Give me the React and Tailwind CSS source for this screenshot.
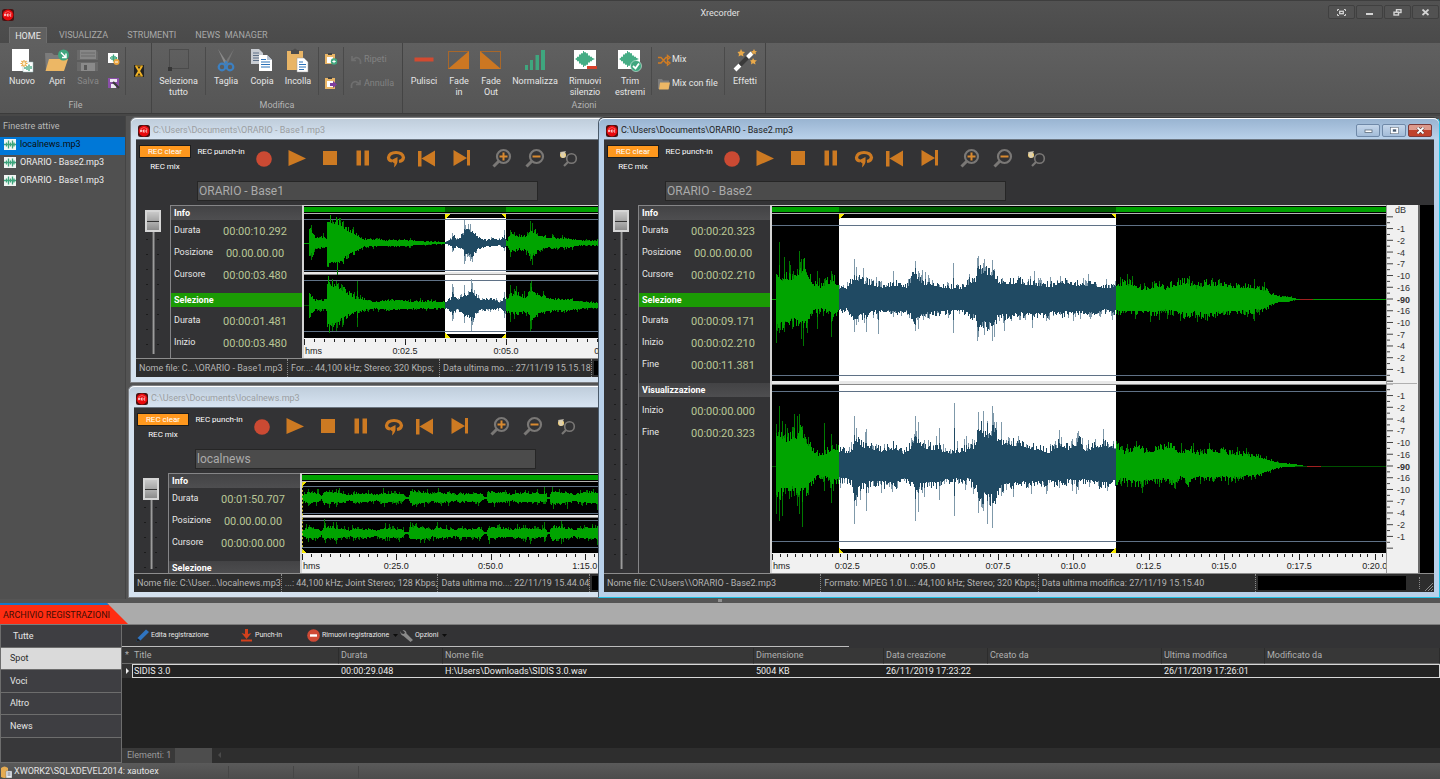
import { useMemo, useState } from "react";
import clsx from "clsx";

/* ---------- shared icons ---------- */

function RecIcon() {
  return (
    <svg viewBox="0 0 12 12" className="w-3 h-3 shrink-0" aria-hidden="true">
      <rect width="12" height="12" rx="2.5" fill="#4a1212" />
      <circle cx="6" cy="6" r="5.4" fill="#e8080c" />
      <path d="M2.5 4 Q6 1 9.5 4" stroke="#ff7a7a" strokeWidth=".7" fill="none" />
      <path d="M2.6 7.2V5h1.2v1.1H2.8M4 7.2l-.5-1M6.8 5H5.3v2.1h1.5M5.3 6h1.3M9.3 5H8v2.1h1.3" stroke="#fff" strokeWidth=".7" fill="none" />
    </svg>
  );
}

function Burst({ x = 0, y = 0, w = 20, h = 14 }) {
  return (
    <g transform={`translate(${x} ${y}) scale(${w / 20} ${h / 14})`} fill="#45ad85">
      <path d="M0 7L2 6V5H4V3H6V2H8V0H9V1H11V2H13V4H15V5H17V6L20 7L17 8V9H15V10H13V12H11V13H9V14H8V12H6V11H4V9H2V8Z" />
    </g>
  );
}

function WaveFileIcon() {
  return (
    <svg viewBox="0 0 12 11" className="w-3 h-[11px] shrink-0" aria-hidden="true">
      <rect width="12" height="11" fill="#f2f6f4" />
      <path d="M0 5.500h12M2.500 3.500v4M4.500 1.500v8M6.500 3.500v4M8.500 1.500v8M10 3.500v4" stroke="#3da57c" strokeWidth="1.300" fill="none" />
    </svg>
  );
}

const bigIcons = {
  nuovo: (
    <>
      <path d="M2 0H19V22H2Z" fill="#fff" />
      <path d="M13 13H23V23H13Z" fill="#fff" stroke="#9bb" strokeWidth=".5" />
      <path d="M15 18v2M17 17v4M19 15.5v6.5M21 17v3" stroke="#3da57c" strokeWidth="1.3" />
      <path d="M14 11v7M10.500 14.500h7M11.500 12l5 5M16.500 12l-5 5" stroke="#e8a33a" strokeWidth="1.100" />
      <circle cx="14" cy="14.500" r="1.500" fill="#fff3d0" />
    </>
  ),
  apri: (
    <>
      <path d="M0 4H7L9 6H17V22H1Z" fill="#7b7b7b" />
      <path d="M4 10H23L19 22H0.500Z" fill="#ecb765" />
      <circle cx="18.500" cy="6" r="5.500" fill="#3fa67e" />
      <path d="M16 3.500l4.500 4.500M21 4.500V8.500H17" stroke="#fff" strokeWidth="1.500" fill="none" />
    </>
  ),
  salva: (
    <>
      <path d="M1 1H20L22 3V22H1Z" fill="#6a6a6a" />
      <path d="M4 1H20V10H4Z" fill="#868686" />
      <path d="M5 4H19M5 7H19" stroke="#6a6a6a" />
      <path d="M5 14H19V22H5Z" fill="#8a8a8a" />
      <path d="M8 16H11V21H8Z" fill="#585858" />
      <path d="M1 12H22" stroke="#585858" strokeWidth="1.500" />
    </>
  ),
  seleziona: (
    <>
      <rect x="2.500" y="0.500" width="19" height="19" fill="none" stroke="#3a3a3a" strokeDasharray="1 1" />
      <rect x="1" y="18" width="4" height="4" fill="#363636" />
    </>
  ),
  taglia: (
    <>
      <path d="M4 0L14 15L11 16Z" fill="#8a8a8a" />
      <path d="M20 0L10 15L13 16Z" fill="#767676" />
      <circle cx="8" cy="18" r="3.300" fill="none" stroke="#3c80c2" strokeWidth="2.200" />
      <circle cx="16" cy="18" r="3.300" fill="none" stroke="#3c80c2" strokeWidth="2.200" />
      <circle cx="12" cy="13.500" r="1.500" fill="#3c80c2" />
    </>
  ),
  copia: (
    <>
      <path d="M1 0H9L13 4V15H1Z" fill="#c8ccd2" />
      <path d="M3 4H9M3 6.500H11M3 9H11M3 11.500H9" stroke="#5d6f86" />
      <path d="M9 6H17L22 11V22H9Z" fill="#fff" />
      <path d="M11 10.500H16M11 13H20M11 15.500H20M11 18H20" stroke="#2d72b8" />
      <path d="M17 6V11H22Z" fill="#b9c6d6" />
    </>
  ),
  incolla: (
    <>
      <path d="M1 2H17V21H1Z" fill="#e9b566" />
      <path d="M5 1H7Q9 -2 11 1H13V5H5Z" fill="#4c4c4c" />
      <path d="M11 9H18L22 13V23H11Z" fill="#fff" stroke="#999" strokeWidth=".5" />
      <path d="M13 13H17M13 15.500H20M13 18H20M13 20.500H18" stroke="#2d72b8" />
    </>
  ),
  pulisci: <path d="M2.500 8.500H21.500V12.500H2.500Z" fill="#d24a30" />,
  fadeIn: (
    <>
      <rect x="1.500" y="2.500" width="20" height="17" fill="none" stroke="#a8672a" />
      <path d="M22 2V20H1Z" fill="#cc7722" />
    </>
  ),
  fadeOut: (
    <>
      <rect x="1.500" y="2.500" width="20" height="17" fill="none" stroke="#a8672a" />
      <path d="M1 2V20H22Z" fill="#cc7722" />
    </>
  ),
  normalizza: <path d="M2 16H5V21H2ZM7 11H10V21H7ZM12.500 6H16V21H12.500ZM18 1H22V21H18Z" fill="#3fa67e" />,
  rimuovi: (
    <>
      <rect x="1" y="1" width="22" height="19" fill="#fff" />
      <Burst x={2} y={2} w={20} h={16} />
      <path d="M14 17H24V20H14Z" fill="#d8402c" />
    </>
  ),
  trim: (
    <>
      <rect x="0" y="1" width="22" height="19" fill="#fff" />
      <Burst x={1} y={2} w={20} h={16} />
      <circle cx="18" cy="17" r="5.500" fill="#3fa67e" stroke="#d8efe4" strokeWidth=".6" />
      <path d="M15 17L17.500 19.300L21 14.500" stroke="#fff" strokeWidth="1.800" fill="none" />
    </>
  ),
  effetti: (
    <>
      <path d="M2 21L7 16" stroke="#fff" strokeWidth="4" />
      <path d="M7 16L15 8" stroke="#3a3a3a" strokeWidth="4" />
      <path d="M14.500 8.500L19 4" stroke="#fff" strokeWidth="4" />
      <path d="M8 0L9.200 2.500L12 3L10 5L10.500 7.500L8 6.300L5.500 7.500L6 5L4.500 3L7 2.500Z" fill="#e9a94a" />
      <path d="M21 0L22 2L24 2.300L22.500 3.500L23 5.500L21 4.600L19 5.500L19.500 3.500L18 2.300L20 2Z" fill="#e9a94a" />
      <path d="M20 9L21.200 11L24 11.500L22 13L22.500 15.500L20 14.300L18 15.500L18.300 13L17 11.500L19.200 11Z" fill="#e9a94a" />
    </>
  ),
};

const smallIcons = {
  minusFile: (
    <>
      <rect x="0" y="0" width="10" height="10" fill="#fff" />
      <path d="M2 5h1M4 3v4M5.500 1.500v7M7 3v5M8.500 4v2" stroke="#3da57c" strokeWidth="1.300" />
      <circle cx="8.500" cy="9" r="3" fill="#e9a23c" />
      <path d="M7 9H10" stroke="#fff" />
    </>
  ),
  saveAs: (
    <>
      <path d="M0 1H11V11H0Z" fill="#8a4fa8" />
      <path d="M2 2H9V5H2ZM3 7H8V11H3Z" fill="#f0e8f4" />
      <path d="M5 5L11 11" stroke="#3c3c3c" strokeWidth="2.200" />
    </>
  ),
  hourglass: (
    <>
      <rect x="1" y="0" width="10" height="12" fill="#222" />
      <path d="M3 1L9 11M9 1L3 11" stroke="#f0b226" strokeWidth="2" />
      <path d="M2 1H10M2 11H10" stroke="#d8a020" strokeWidth="1.200" />
    </>
  ),
  pasteAdd: (
    <>
      <path d="M0 1H10V11H0Z" fill="#e9b566" />
      <path d="M3 0H7V2H3Z" fill="#444" />
      <path d="M2 4H8V10H2Z" fill="#fff" />
      <circle cx="9" cy="8.500" r="3.200" fill="#3fa67e" />
      <path d="M9 6.800V10.200M7.300 8.500H10.700" stroke="#fff" />
    </>
  ),
  pasteNext: (
    <>
      <path d="M0 1H10V12H0Z" fill="#e9b566" />
      <path d="M3 0H7V2H3Z" fill="#444" />
      <path d="M2 4H8V10H2Z" fill="#fff" />
      <path d="M5 6H8V4L12 7.500L8 11V9H5Z" fill="#7d3f9e" />
    </>
  ),
  back: <path d="M10.500 10V7Q9.500 3.500 6 3.500L2 6M2 2V6.500H6" stroke="#6f6f6f" strokeWidth="1.700" fill="none" />,
  forward: <path d="M1.500 10V7Q2.500 3.500 6 3.500L10 6M10 2V6.500H6" stroke="#6f6f6f" strokeWidth="1.700" fill="none" />,
  shuffle: (
    <path d="M0 3.500H3L8 9H10M0 9H3L8 3.500H10M9.500 1.500L12 3.500L9.500 5.500ZM9.500 7L12 9L9.500 11Z" stroke="#d17c22" strokeWidth="1.400" fill="none" />
  ),
  folder: (
    <>
      <path d="M0 1H4L5 2.500H11V11H0Z" fill="#7b7b7b" />
      <path d="M2 4.500H12L10.500 11.500H1Z" fill="#ecb765" />
    </>
  ),
};

function SmallIcon({ name }) {
  return (
    <svg viewBox="0 0 12 12" className="w-3 h-3 shrink-0 overflow-visible" aria-hidden="true">
      {smallIcons[name]}
    </svg>
  );
}

/* ---------- ribbon ---------- */

function BigButton({ icon, label, className, disabled }) {
  return (
    <button
      type="button"
      disabled={disabled}
      className={clsx("flex flex-col items-center pt-[6px] gap-[5px] leading-[11px]", className, disabled ? "text-[#888888]" : "text-[#e6e6e6]")}
    >
      <svg viewBox="0 0 24 22" className="w-6 h-[22px] shrink-0 overflow-visible" aria-hidden="true">
        {bigIcons[icon]}
      </svg>
      <span>{label}</span>
    </button>
  );
}

function IconStack({ icons }) {
  return (
    <div className="flex flex-col items-center gap-3 pt-[10px] flex-1">
      {icons.map(([name, label]) => (
        <button key={name} type="button" aria-label={label}>
          <SmallIcon name={name} />
        </button>
      ))}
    </div>
  );
}

function LabelStack({ items, disabled, className }) {
  return (
    <div className={clsx("flex flex-col gap-3 pt-[11px] pl-[6px]", className)}>
      {items.map(([icon, label]) => (
        <button
          key={label}
          type="button"
          disabled={disabled}
          className={clsx("flex items-center gap-[2px] h-3 whitespace-nowrap", disabled ? "text-[#828282]" : "text-[#e6e6e6]")}
        >
          <SmallIcon name={icon} />
          {label}
        </button>
      ))}
    </div>
  );
}

function Sep() {
  return <div className="w-px h-12 mt-1 bg-[#4a4a4a] shrink-0" />;
}

function RibbonGroup({ title, children }) {
  return (
    <section className="flex flex-col border-r border-[#444444]">
      <div className="flex flex-1">{children}</div>
      <h2 className="h-[14px] leading-[13px] text-center text-[#b4b4b4]">{title}</h2>
    </section>
  );
}

function Ribbon() {
  return (
    <div className="flex h-[71px] bg-linear-to-b from-[#606060] to-[#555555] border-b border-[#3b3b3b] text-[9px]">
      <RibbonGroup title="File">
        <BigButton icon="nuovo" label="Nuovo" className="ml-1 w-9" />
        <BigButton icon="apri" label="Apri" className="w-[34px]" />
        <BigButton icon="salva" label="Salva" className="w-7" disabled />
        <div className="w-[23px] flex">
          <IconStack icons={[["minusFile", "Chiudi"], ["saveAs", "Salva con nome"]]} />
        </div>
        <Sep />
        <button type="button" aria-label="Attesa" className="w-[25px] flex justify-center items-center">
          <SmallIcon name="hourglass" />
        </button>
      </RibbonGroup>
      <RibbonGroup title="Modifica">
        <BigButton icon="seleziona" label={<>Seleziona<br />tutto</>} className="w-[53px]" />
        <Sep />
        <BigButton icon="taglia" label="Taglia" className="w-10" />
        <BigButton icon="copia" label="Copia" className="w-8" />
        <BigButton icon="incolla" label="Incolla" className="w-10" />
        <Sep />
        <div className="w-6 flex">
          <IconStack icons={[["pasteAdd", "Incolla e aggiungi"], ["pasteNext", "Incolla in nuovo"]]} />
        </div>
        <Sep />
        <LabelStack items={[["back", "Ripeti"], ["forward", "Annulla"]]} className="w-[58px]" disabled />
      </RibbonGroup>
      <RibbonGroup title="Azioni">
        <BigButton icon="pulisci" label="Pulisci" className="w-[42px]" />
        <BigButton icon="fadeIn" label={<>Fade<br />in</>} className="w-7" />
        <BigButton icon="fadeOut" label={<>Fade<br />Out</>} className="w-9" />
        <BigButton icon="normalizza" label="Normalizza" className="w-[52px]" />
        <BigButton icon="rimuovi" label={<>Rimuovi<br />silenzio</>} className="w-12" />
        <BigButton icon="trim" label={<>Trim<br />estremi</>} className="w-[42px]" />
        <Sep />
        <LabelStack items={[["shuffle", "Mix"], ["folder", "Mix con file"]]} className="w-[72px]" />
        <Sep />
        <BigButton icon="effetti" label="Effetti" className="w-10" />
      </RibbonGroup>
    </div>
  );
}

function Header() {
  const [tab, setTab] = useState("HOME");
  const tabs = ["HOME", "VISUALIZZA", "STRUMENTI", "NEWS  MANAGER"];
  const box = "w-[27px] h-[14px] flex items-center justify-center border border-[#404040] rounded-xs bg-[#525252]";

  return (
    <header className="bg-linear-to-b from-[#525252] to-[#4a4a4a] border-t border-[#3e3e3e]">
      <div className="grid grid-cols-3 h-[26px]">
        <div className="pl-[2px] pt-2">
          <RecIcon />
        </div>
        <h1 className="text-center text-[9px] leading-[24px] text-[#e2e2e2]">Xrecorder</h1>
        <div className="flex justify-end gap-px pt-1 pr-px">
          <button type="button" aria-label="Schermo intero" className={box}>
            <svg viewBox="0 0 9 7" className="w-[9px] h-[7px]" stroke="#d4d4d4" fill="none">
              <path d="M.5 2V.5H2M7 .5H8.500V2M8.500 5V6.500H7M2 6.500H.5V5" />
              <rect x="2.700" y="2.300" width="3.600" height="2.400" strokeWidth="1.300" />
            </svg>
          </button>
          <button type="button" aria-label="Riduci" className={box}>
            <svg viewBox="0 0 9 7" className="w-[9px] h-[7px]">
              <path d="M1 4H8V6H1Z" fill="#d4d4d4" />
            </svg>
          </button>
          <button type="button" aria-label="Ripristina" className={box}>
            <svg viewBox="0 0 9 7" className="w-[9px] h-[7px]" stroke="#d4d4d4" fill="none" strokeWidth="1.400">
              <rect x="3.500" y=".7" width="4.500" height="2.800" />
              <rect x="1" y="3.200" width="4.500" height="2.800" fill="#525252" />
            </svg>
          </button>
          <button type="button" aria-label="Chiudi" className={box}>
            <svg viewBox="0 0 9 7" className="w-[9px] h-[7px]">
              <path d="M1.500 .5L7.500 6M7.500 .5L1.500 6" stroke="#d4d4d4" strokeWidth="1.700" />
            </svg>
          </button>
        </div>
      </div>
      <nav className="flex h-4 pl-[9px] text-[9px] leading-4">
        {tabs.map((t) => (
          <button
            key={t}
            type="button"
            onClick={() => setTab(t)}
            className={clsx(
              "whitespace-pre mr-[5px]",
              t === tab ? "w-[38px] bg-[#606060] border-x border-t border-[#6c6c6c] text-[#e8e8e8]" : "px-[7px] text-[#a8a8a8]"
            )}
          >
            {t}
          </button>
        ))}
      </nav>
    </header>
  );
}

/* ---------- wave forms ---------- */

// small deterministic generator, so that a file always draws the same
function makeRandom(seed) {
  let a = seed;
  return () => {
    a = (a * 1664525 + 1013904223) % 4294967296;
    return a / 4294967296;
  };
}

function valueAt(points, x) {
  for (let i = 1; i < points.length; i++) {
    const [x0, u0, d0] = points[i - 1];
    const [x1, u1, d1] = points[i];
    if (x <= x1) {
      const t = (x - x0) / (x1 - x0 || 1);
      return [u0 + (u1 - u0) * t, d0 + (d1 - d0) * t];
    }
  }
  return [0, 0];
}

function buildColumns(lane, width) {
  const rnd = makeRandom(lane.seed);
  const cols = [];
  for (let x = 0; x < width; x++) {
    const [u, d] = valueAt(lane.points, x);
    const n1 = 0.82 + 0.42 * rnd() ** 2;
    const n2 = 0.82 + 0.42 * rnd() ** 2;
    const tip1 = rnd() < 0.25 ? 1 + rnd() * lane.rough : 1;
    const tip2 = rnd() < 0.25 ? 1 + rnd() * lane.rough : 1;
    cols.push({ x, up: u * n1, down: d * n2, tipUp: u * n1 * tip1, tipDown: d * n2 * tip2 });
  }
  (lane.spikes || []).forEach(([x, up, down]) => {
    const c = cols[x];
    c.tipUp = up;
    c.tipDown = down;
    c.up = Math.max(c.up, up * 0.6);
    c.down = Math.max(c.down, down * 0.6);
  });
  return cols;
}

// stepped outline, one step for each column
function columnsPath(cols, center, up, down) {
  return cols.map((c) => `M${c.x} ${(center - c[up]).toFixed(1)}h1V${(center + c[down]).toFixed(1)}h-1Z`).join("");
}

function WaveLanes({ wave }) {
  const { width, height, lanes, selection, split } = wave;
  const drawn = useMemo(() => lanes.map((lane) => buildColumns(lane, width)), [lanes, width]);
  const [s0, s1] = selection || [0, 0];

  return (
    <svg viewBox={`0 0 ${width} ${height}`} preserveAspectRatio="none" className="block w-full flex-1 min-h-0 bg-black" shapeRendering="crispEdges">
      {selection && <rect x={s0} y="4" width={s1 - s0} height={height - 8} fill="#fff" />}
      <rect x="0" y={split} width={width} height="2" fill="#e8e8e8" />
      <rect x="0" y={split + 2} width={width} height="1" fill="#8a8a8a" />
      {lanes.map((lane, i) => {
        const inside = drawn[i].filter((c) => c.x >= s0 && c.x < s1);
        const outside = drawn[i].filter((c) => c.x < s0 || c.x >= s1);
        return (
          <g key={lane.center}>
            {lane.guides.map((y) => (
              <rect key={y} x="0" y={y} width={width} height="1" fill="#5f7186" />
            ))}
            <rect x="0" y={lane.center} width={width} height="1" fill={i ? "#005000" : "#00a000"} />
            <path d={columnsPath(outside, lane.center, "tipUp", "tipDown")} fill="#007800" />
            <path d={columnsPath(outside, lane.center, "up", "down")} fill="#00a400" />
            <path d={columnsPath(inside, lane.center, "tipUp", "tipDown")} fill="#7f99aa" />
            <path d={columnsPath(inside, lane.center, "up", "down")} fill="#204a63" />
            {lane.red && <rect x={lane.red[0]} y={lane.center} width={lane.red[1]} height="1" fill="#a02020" />}
          </g>
        );
      })}
      <path
        d={`M${s0} 0h5l-5 5ZM${s0} ${height}h5l-5 -5Z` + (selection ? `M${s1} 0h-5l5 5ZM${s1} ${height}h-5l5 -5Z` : "")}
        fill="#f5e800"
      />
      {!selection && <path d={`M.5 0V${height}`} stroke="#d8cf30" strokeDasharray="2 2" />}
    </svg>
  );
}

function TimeRuler({ labels, step }) {
  const ticks = [];
  for (let i = 0; (i * step) / 10 < 100; i++) ticks.push(i);
  return (
    <svg className="block w-full h-5 shrink-0 bg-[#f1f1f1] font-['Liberation_Sans',sans-serif]" shapeRendering="crispEdges">
      {ticks.map((i) => (
        <rect key={i} x={`${(i * step) / 10}%`} y="1" width="1" height={i % 10 ? 3 : 6} fill="#222" />
      ))}
      <text x="1" y="16" fontSize="9" fill="#222">hms</text>
      {labels.map((l, i) => (
        <text key={l} x={`${(i + 1) * step}%`} y="16" fontSize="9" textAnchor="middle" fill="#222">
          {l}
        </text>
      ))}
    </svg>
  );
}

const dbLabels = ["-1", "-2", "-4", "-7", "-10", "-16", "-90", "-16", "-10", "-7", "-4", "-2", "-1"];

function DbScale({ wave }) {
  const pct = (v) => `${(v / wave.height) * 100}%`;
  const step = 11.67;
  return (
    <div className="w-8 shrink-0 flex flex-col bg-[#f0f0f0] text-[#333333] border-l border-[#9a9a9a] font-['Liberation_Sans',sans-serif]">
      <div className="h-2 pl-2 text-[9px] leading-[11px]">dB</div>
      <svg className="block w-full flex-1 min-h-0 overflow-visible">
        {wave.lanes.map((lane) => (
          <g key={lane.center}>
            {dbLabels.map((l, i) => (
              <text key={i} x="10" y={pct(lane.center + (i - 6) * step + 4)} fontSize="9" fill="#333" fontWeight={l === "-90" ? 700 : 400}>
                {l}
              </text>
            ))}
            {Array.from({ length: 29 }, (_, i) => (
              <rect key={i} x="0" y={pct(lane.center + (i - 14) * (step / 2))} width={i % 2 ? 3 : 6} height="1" fill="#444" />
            ))}
          </g>
        ))}
        <rect x="0" y={pct(wave.split + 2)} width="30" height="1" fill="#b0b0b0" />
      </svg>
      <div className="h-5" />
    </div>
  );
}

const base2Wave = {
  width: 614,
  height: 338,
  split: 167,
  selection: [67, 344],
  step: 12.27,
  labels: ["0:02.5", "0:05.0", "0:07.5", "0:10.0", "0:12.5", "0:15.0", "0:17.5", "0:20.0"],
  lanes: [
    {
      center: 85, guides: [11, 161], seed: 17, rough: 0.5, red: [528, 13],
      points: [
        [0, 0, 0], [3, 0, 0], [4, 28, 30], [10, 22, 27], [20, 23, 22], [28, 32, 26], [33, 34, 26], [40, 18, 14], [46, 12, 10], [53, 17, 12],
        [62, 20, 18], [67, 12, 12], [76, 13, 11], [82, 24, 24], [88, 20, 18], [96, 17, 14], [110, 14, 13], [122, 16, 14], [135, 14, 13], [143, 28, 24],
        [150, 18, 17], [165, 15, 14], [180, 12, 13], [190, 13, 13], [200, 20, 18], [204, 22, 18], [206, 36, 34], [212, 26, 24], [220, 28, 30], [224, 20, 20], [230, 18, 18], [250, 18, 16],
        [270, 15, 17], [282, 15, 14], [288, 20, 15], [310, 15, 14], [320, 17, 16], [332, 13, 12], [345, 15, 13], [352, 17, 14], [362, 16, 14], [370, 11, 13], [380, 12, 15], [386, 15, 14], [392, 11, 11],
        [400, 15, 13], [415, 18, 17], [424, 13, 14], [432, 16, 18], [445, 16, 14], [460, 14, 14], [480, 13, 13],
        [494, 10, 10], [498, 6, 6], [507, 3, 3], [516, 3, 3], [522, 1, 1], [530, 0, 0], [615, 0, 0],
      ],
      spikes: [[7, 57, 34], [12, 42, 33], [27, 48, 25], [29, 40, 40], [31, 40, 47], [45, 28, 30], [59, 28, 38], [60, 25, 22], [82, 40, 33], [84, 32, 26], [94, 22, 33], [106, 18, 35], [121, 28, 18], [143, 38, 32], [146, 28, 30], [181, 36, 34], [205, 41, 42], [206, 43, 38], [212, 40, 36], [220, 39, 42], [222, 30, 38]],
    },
    {
      center: 251, guides: [176, 326], seed: 91, rough: 0.45, red: [535, 14],
      points: [
        [0, 0, 0], [3, 0, 0], [4, 34, 30], [10, 28, 27], [20, 30, 25], [28, 34, 27], [33, 30, 26], [40, 16, 18], [46, 12, 10], [53, 14, 13],
        [62, 20, 16], [67, 17, 14], [74, 14, 15], [80, 18, 18], [82, 32, 32], [88, 22, 22], [96, 20, 18], [110, 17, 18], [122, 20, 20], [132, 14, 15], [140, 22, 18], [143, 32, 30],
        [148, 20, 20], [165, 19, 19], [180, 14, 14], [190, 17, 16], [197, 17, 15], [204, 22, 22], [206, 42, 38], [212, 34, 32], [222, 34, 35], [230, 24, 22], [250, 23, 19],
        [270, 17, 18], [276, 15, 17], [288, 24, 18], [297, 17, 16], [306, 26, 18], [312, 17, 16], [330, 22, 20], [345, 20, 16], [352, 14, 14], [365, 18, 19], [375, 15, 16], [390, 19, 15], [400, 21, 17], [408, 13, 12], [416, 18, 17], [424, 13, 13], [440, 16, 13],
        [460, 13, 13], [480, 11, 11], [490, 9, 9], [500, 5, 4], [507, 3, 2], [520, 2, 1], [532, 0, 0], [615, 0, 0],
      ],
      spikes: [[4, 42, 48], [7, 60, 55], [10, 45, 50], [22, 52, 30], [25, 50, 40], [27, 52, 48], [30, 40, 61], [52, 43, 25], [59, 32, 37], [82, 50, 58], [84, 38, 40], [94, 37, 45], [143, 50, 55], [146, 44, 46], [167, 38, 34], [182, 63, 50], [206, 54, 47], [211, 55, 45], [215, 45, 58], [220, 60, 62], [229, 44, 30], [287, 36, 22], [306, 35, 24]],
    },
  ],
};

const base1Wave = {
  width: 418,
  height: 124,
  split: 58,
  selection: [141, 202],
  step: 24.15,
  labels: ["0:02.5", "0:05.0", "0:07.5"],
  lanes: [
    {
      center: 29, guides: [5, 56], seed: 5, rough: 0.4,
      points: [
        [0, 0, 0], [4, 0, 0], [5, 13, 13], [8, 12, 12], [11, 6, 6], [20, 6, 5], [22, 5, 5], [23, 25, 24], [34, 22, 22], [42, 15, 14], [50, 10, 10],
        [60, 4, 4], [75, 3, 3], [105, 3, 3], [112, 2, 2], [141, 1, 1], [147, 4, 3], [149, 9, 7], [152, 4, 3], [158, 8, 6], [162, 13, 11], [168, 13, 13],
        [174, 6, 6], [182, 3, 3], [189, 5, 4], [195, 3, 2], [200, 6, 5], [203, 3, 3], [206, 10, 9], [216, 7, 6], [222, 7, 7], [227, 14, 14], [234, 9, 8],
        [244, 6, 5], [256, 5, 5], [264, 5, 5], [271, 3, 3], [300, 2, 2], [421, 1, 1],
      ],
      spikes: [[7, 18, 17], [106, 5, 5], [148, 10, 9], [160, 23, 21], [161, 18, 18], [166, 19, 18], [200, 13, 8], [206, 13, 14], [226, 22, 18], [228, 20, 22]],
    },
    {
      center: 91, guides: [66, 117], seed: 8, rough: 0.5,
      points: [
        [0, 0, 0], [4, 0, 0], [5, 11, 11], [8, 9, 9], [11, 5, 5], [22, 5, 5], [23, 24, 23], [32, 21, 20], [42, 14, 12], [50, 8, 8], [60, 6, 5],
        [70, 3, 4], [82, 5, 5], [105, 4, 4], [125, 4, 4], [141, 3, 3], [149, 9, 8], [153, 5, 4], [160, 11, 10], [168, 13, 13], [176, 6, 5], [189, 6, 5],
        [195, 3, 3], [200, 7, 7], [204, 7, 7], [210, 12, 9], [222, 8, 7], [227, 16, 16], [236, 10, 8], [250, 6, 6], [264, 6, 6], [280, 3, 3], [421, 2, 2],
      ],
      spikes: [[28, 26, 26], [32, 24, 26], [38, 20, 22], [53, 24, 22], [148, 21, 16], [149, 18, 14], [160, 20, 18], [167, 26, 26], [168, 22, 20], [200, 13, 13], [206, 20, 17], [210, 16, 14], [226, 22, 26], [227, 24, 24]],
    },
  ],
};

// speech: a band that breathes, with short rests
const speechPoints = [
  [0, 3, 3], [6, 6, 6], [16, 5, 5], [19, 2, 2], [22, 7, 6], [40, 5, 5], [48, 3, 3], [52, 5, 5], [68, 4, 4], [75, 3, 3], [79, 5, 5], [100, 4, 4], [103, 1, 1], [106, 1, 1],
  [108, 7, 7], [128, 5, 5], [130, 3, 3], [134, 6, 5], [150, 4, 4], [154, 3, 3], [157, 5, 5], [162, 4, 4], [178, 5, 5], [182, 1, 1], [184, 1, 1], [186, 6, 6],
  [206, 5, 4], [210, 3, 3], [213, 5, 5], [230, 5, 5], [244, 4, 4], [245, 1, 1], [247, 1, 1], [249, 7, 7], [268, 5, 5], [272, 3, 3], [276, 5, 5], [286, 6, 6], [421, 5, 5],
];

const newsWave = {
  width: 418,
  height: 72,
  split: 33,
  selection: null,
  step: 22.55,
  labels: ["0:25.0", "0:50.0", "1:15.0"],
  lanes: [
    { center: 16, guides: [4, 31], seed: 21, rough: 0.9, points: speechPoints, spikes: [[6, 9, 8], [34, 9, 9], [242, 11, 6]] },
    { center: 52, guides: [39, 66], seed: 33, rough: 0.9, points: speechPoints, spikes: [[34, 11, 11], [83, 10, 8], [242, 11, 9]] },
  ],
};

/* ---------- child windows ---------- */

const orange = "#cd7a22";

const transport = [
  ["Registra", <circle key="i" cx="10" cy="10" r="7.8" fill="#cb4a33" />],
  ["Riproduci", <path key="i" d="M1.500 1L19 9.500L1.500 17Z" fill={orange} />],
  ["Ferma", <path key="i" d="M3 2H17V16H3Z" fill={orange} />],
  ["Pausa", <path key="i" d="M3.500 1.500H8V16.500H3.500ZM11.500 1.500H16V16.500H11.500Z" fill={orange} />],
  [
    "Ripeti ciclo",
    <g key="i">
      <path d="M6 12Q2.500 11.500 2.500 8.500Q3.500 3.500 10 3.500Q16.500 3.500 17.500 8.500Q17 12 13 12.500" stroke={orange} strokeWidth="3.200" fill="none" />
      <path d="M4.500 11.500L11.500 8V10.500Q12 15 8 18.500L8.500 14.500Z" fill={orange} />
    </g>,
  ],
  ["Inizio", <path key="i" d="M-1 2H2.500V17.500H-1ZM2.500 9.500L16 1.500V17.500Z" fill={orange} />],
  ["Fine", <path key="i" d="M18 1H15V16.500H18ZM15 9L1.500 1V17Z" fill={orange} />],
];

const zooms = [
  [
    "Ingrandisci",
    <g key="i">
      <circle cx="11.500" cy="7.500" r="6.500" fill="none" stroke="#7a7876" strokeWidth="2.200" />
      <path d="M7 12L1.500 17.500" stroke="#7a7876" strokeWidth="3" />
      <path d="M11.500 3.500V11.500M7.500 7.500H15.500" stroke="#d98a30" strokeWidth="2" />
    </g>,
  ],
  [
    "Riduci zoom",
    <g key="i">
      <circle cx="11.500" cy="7.500" r="6.500" fill="none" stroke="#7a7876" strokeWidth="2.200" />
      <path d="M7 12L1.500 17.500" stroke="#7a7876" strokeWidth="3" />
      <path d="M7.500 7.500H15.500" stroke="#d98a30" strokeWidth="2" />
    </g>,
  ],
  [
    "Zoom selezione",
    <g key="i">
      <circle cx="13.500" cy="9.500" r="4.800" fill="none" stroke="#7a7876" strokeWidth="1.600" />
      <path d="M10 13L6 17" stroke="#7a7876" strokeWidth="2.200" />
      <circle cx="5" cy="6" r="3" fill="#f3d27a" />
      <path d="M2 3L8 2L6 6L8 8L4 9Z" fill="#d7d0c0" opacity=".8" />
    </g>,
  ],
];

function IconButtons({ items, className }) {
  return (
    <div className={clsx("flex", className)}>
      {items.map(([label, icon]) => (
        <button key={label} type="button" aria-label={label} className="w-[33px] h-5 flex justify-center">
          <svg viewBox="0 0 20 19" className="w-5 h-[19px] overflow-visible" aria-hidden="true">
            {icon}
          </svg>
        </button>
      ))}
    </div>
  );
}

function InfoSection({ title, rows, active, first }) {
  return (
    <section>
      <h3
        className={clsx(
          "h-[14px] pl-[3px] text-[9px] leading-[14px] font-bold text-white",
          active ? "bg-[#1b9a04]" : "bg-linear-to-b from-[#434345] to-[#4e4e50]"
        )}
      >
        {title}
      </h3>
      <dl className={clsx(first ? "pb-[7px]" : "pt-[3px] pb-[7px]")}>
        {rows.map(([label, value]) => (
          <div key={label} className="flex items-center h-[22px] pl-[3px]">
            <dt className="w-[49px] text-[9px] text-[#e8e8e8]">{label}</dt>
            <dd className="text-[11px] text-[#b9c795] w-[64px] text-center leading-none">{value}</dd>
          </div>
        ))}
      </dl>
    </section>
  );
}

function StatusText({ children }) {
  return <span className="flex-1 min-w-max pl-[3px] border-r border-dotted border-[#8a8a8a] whitespace-nowrap">{children}</span>;
}

function AudioWindow({ id, path, name, info, status, wave, active, className }) {
  const [title, setTitle] = useState(name);
  const [mode, setMode] = useState("REC clear");
  const modeButton = (m) => (
    <button
      type="button"
      onClick={() => setMode(m)}
      className={clsx(
        "h-[13px] w-[52px] text-[8px] leading-[11px] text-white border whitespace-nowrap",
        m === mode ? "bg-[#ff981e] border-[#1d1d1d]" : "border-transparent"
      )}
    >
      {m}
    </button>
  );
  const [s0, s1] = wave.selection || [0, 0];

  return (
    <article
      className={clsx(
        "absolute flex flex-col rounded-t-md border px-[5px] pb-[5px]",
        active
          ? "bg-[#b9d1ea] border-[#23c3e6] border-t-[#3b3b3b] border-l-[#4a5a6a] border-b-[#23c3e6]"
          : "bg-[#d5e2ef] border-[#7d7f82]",
        className
      )}
    >
      <div
        className={clsx(
          "-mx-[5px] px-[7px] pt-[3px] h-[21px] shrink-0 flex items-center gap-[3px] rounded-t-md border-t border-white text-[9px]",
          active ? "bg-linear-to-b from-[#99b4d1] to-[#b9d1ea] text-[#1c1c1c]" : "bg-linear-to-b from-[#bfcddb] to-[#d7e4f2] text-[#9b9ea1]"
        )}
      >
        <RecIcon />
        <h2 className="flex-1 whitespace-nowrap">{path}</h2>
        {active && (
          <div className="flex gap-[2px]">
            <button type="button" aria-label="Riduci finestra" className="w-6 h-[13px] rounded-xs border border-[#6f89a8] bg-linear-to-b from-[#c4d6ea] to-[#a3bcd8] flex items-center justify-center">
              <svg viewBox="0 0 9 7" className="w-[9px] h-[7px]"><rect x="1" y="3" width="7" height="2.500" fill="#fff" stroke="#5b6a7a" strokeWidth=".8" /></svg>
            </button>
            <button type="button" aria-label="Ingrandisci finestra" className="w-6 h-[13px] rounded-xs border border-[#6f89a8] bg-linear-to-b from-[#c4d6ea] to-[#a3bcd8] flex items-center justify-center">
              <svg viewBox="0 0 9 7" className="w-[9px] h-[7px]"><rect x="1.500" y="1" width="6" height="5" fill="none" stroke="#fff" strokeWidth="2" /><rect x=".5" y=".3" width="8" height="6.400" fill="none" stroke="#5b6a7a" strokeWidth=".6" /><rect x="3" y="2.500" width="3" height="2" fill="#4c5866" /></svg>
            </button>
            <button type="button" aria-label="Chiudi finestra" className="w-6 h-[13px] rounded-xs border border-[#7a3a3a] bg-linear-to-b from-[#dd9a8c] from-45% to-[#c0422c] to-50% flex items-center justify-center">
              <svg viewBox="0 0 9 7" className="w-[9px] h-[7px]"><path d="M1.500 .5L7.500 6.500M7.500 .5L1.500 6.500" stroke="#5a3a3a" strokeWidth="3" /><path d="M1.500 .5L7.500 6.500M7.500 .5L1.500 6.500" stroke="#fff" strokeWidth="1.800" /></svg>
            </button>
          </div>
        )}
      </div>

      <div className="flex-1 min-h-0 flex flex-col bg-[#333335] border-t border-[#6b7580] overflow-hidden">
        <div className="h-[41px] shrink-0 flex items-start pt-[5px] pl-[3px]">
          <div className="flex flex-col gap-[2px]">
            {modeButton("REC clear")}
            {modeButton("REC mix")}
          </div>
          <div className="flex ml-1">{modeButton("REC punch-in")}</div>
          <IconButtons items={transport} className="mt-1" />
          <IconButtons items={zooms} className="mt-1 ml-[7px]" />
        </div>
        <div className="h-6 shrink-0 pl-[61px]">
          <input
            aria-label="Titolo"
            id={`title-${id}`}
            value={title}
            onChange={(e) => setTitle(e.target.value)}
            className="block w-[341px] h-5 px-px text-[12px] bg-[#4b4b4b] border border-[#262626] text-[#aaaaaa] outline-none"
          />
        </div>

        <div className="flex flex-1 min-h-0">
          <div className="w-[34px] shrink-0 flex justify-center pt-[5px] pb-1">
            <input
              type="range"
              aria-label="Volume"
              min="0"
              max="100"
              defaultValue="100"
              className="h-full w-4 appearance-none [writing-mode:vertical-lr] [direction:rtl] bg-[linear-gradient(to_right,#333335_0px,#333335_1px,transparent_1px,transparent_3px,#333335_3px,#333335_7px,#1f1f1f_7px,#9c9c9c_8px,#9c9c9c_9px,#333335_10px,#333335_12px,transparent_12px,transparent_14px,#333335_14px),repeating-linear-gradient(to_bottom,#333335_0px,#333335_14px,#1c1c1c_14px,#1c1c1c_15px)] [&::-webkit-slider-thumb]:appearance-none [&::-webkit-slider-thumb]:w-4 [&::-webkit-slider-thumb]:h-[22px] [&::-webkit-slider-thumb]:border-2 [&::-webkit-slider-thumb]:border-[#d6d6d6] [&::-webkit-slider-thumb]:bg-[linear-gradient(to_bottom,#c9c9c9_0px,#a5a5a5_9px,#333333_9px,#333333_10px,#b0b0b0_10px,#8c8c8c_18px)]"
            />
          </div>
          <div className="w-[132px] shrink-0 border-l border-t border-[#858587] overflow-hidden">
            {info.map((s, i) => (
              <InfoSection key={s.title} {...s} first={i === 0} />
            ))}
          </div>
          <div className="flex-1 min-w-0 flex flex-col border-l-2 border-t border-[#d4d4d4]">
            <div className="h-2 shrink-0 bg-black border-b border-[#b4b4b4] pt-px">
              <svg viewBox={`0 0 ${wave.width} 6`} preserveAspectRatio="none" className="block w-full h-[5px]">
                <rect width={wave.width} height="6" fill="#00a000" />
                <rect x={s0} width={s1 - s0} height="6" fill="#005c00" />
              </svg>
            </div>
            <WaveLanes wave={wave} />
            <TimeRuler labels={wave.labels} step={wave.step} />
          </div>
          {active ? <DbScale wave={wave} /> : <div className="w-8 shrink-0 bg-[#f0f0f0]" />}
          <div className="w-4 shrink-0 bg-black border-l-2 border-[#6a6a6a]" />
        </div>

        <footer className="h-[19px] shrink-0 flex items-stretch border-t border-[#8d8d8d] bg-[#2d2d2d] text-[9px] leading-[18px] text-[#b4b4b4]">
          {status.map((s) => (
            <StatusText key={s}>{s}</StatusText>
          ))}
          <span className="w-[178px] shrink-0 flex items-center pl-[2px]">
            <span className="w-[148px] h-[14px] bg-black" />
            <span className="h-3 ml-[13px] border-l border-dotted border-[#8a8a8a]" />
            <svg viewBox="0 0 8 8" className="w-2 h-2 ml-[5px] mt-2"><path d="M0 8L8 0M3 8L8 3M6 8L8 6" stroke="#8a8a8a" /></svg>
          </span>
        </footer>
      </div>
    </article>
  );
}

const windows = [
  {
    id: "base1",
    path: "C:\\Users\\Documents\\ORARIO - Base1.mp3",
    name: "ORARIO - Base1",
    className: "left-1 top-px w-[646px] h-[266px]",
    wave: base1Wave,
    info: [
      { title: "Info", rows: [["Durata", "00:00:10.292"], ["Posizione", "00.00.00.00"], ["Cursore", "00:00:03.480"]] },
      { title: "Selezione", active: true, rows: [["Durata", "00:00:01.481"], ["Inizio", "00:00:03.480"]] },
    ],
    status: ["Nome file: C...\\ORARIO - Base1.mp3", "For...: 44,100 kHz; Stereo; 320 Kbps;", "Data ultima mo...: 27/11/19 15.15.18"],
  },
  {
    id: "news",
    path: "C:\\Users\\Documents\\localnews.mp3",
    name: "localnews",
    className: "left-[2px] top-[269px] w-[646px] bottom-px",
    wave: newsWave,
    info: [
      { title: "Info", rows: [["Durata", "00:01:50.707"], ["Posizione", "00.00.00.00"], ["Cursore", "00:00:00.000"]] },
      { title: "Selezione", rows: [] },
    ],
    status: ["Nome file: C:\\User...\\localnews.mp3", "...: 44,100 kHz; Joint Stereo; 128 Kbps;", "Data ultima mo...: 22/11/19 15.44.04"],
  },
  {
    id: "base2",
    path: "C:\\Users\\Documents\\ORARIO - Base2.mp3",
    name: "ORARIO - Base2",
    active: true,
    className: "left-[472px] right-0 top-px bottom-px",
    wave: base2Wave,
    info: [
      { title: "Info", rows: [["Durata", "00:00:20.323"], ["Posizione", "00.00.00.00"], ["Cursore", "00:00:02.210"]] },
      { title: "Selezione", active: true, rows: [["Durata", "00:00:09.171"], ["Inizio", "00:00:02.210"], ["Fine", "00:00:11.381"]] },
      { title: "Visualizzazione", rows: [["Inizio", "00:00:00.000"], ["Fine", "00:00:20.323"]] },
    ],
    status: ["Nome file: C:\\Users\\\\ORARIO - Base2.mp3", "Formato: MPEG 1.0 l...: 44,100 kHz; Stereo; 320 Kbps;", "Data ultima modifica: 27/11/19 15.15.40"],
  },
];

function ActiveWindows() {
  const files = ["localnews.mp3", "ORARIO - Base2.mp3", "ORARIO - Base1.mp3"];
  const [current, setCurrent] = useState(files[0]);
  return (
    <aside className="w-[126px] shrink-0 bg-[#505050] border-r border-[#444444] text-[9px]">
      <h2 className="h-[21px] pl-[3px] leading-[20px] bg-[#3f4042] text-[#b8b8b8]">Finestre attive</h2>
      {files.map((f) => (
        <button
          key={f}
          type="button"
          onClick={() => setCurrent(f)}
          className={clsx("flex w-full h-[18px] items-center gap-1 pl-1 pb-[3px]", f === current ? "bg-[#0078d7] text-[#0c0c0c]" : "text-[#ececec]")}
        >
          <WaveFileIcon />
          {f}
        </button>
      ))}
    </aside>
  );
}

/* ---------- archive ---------- */

const archiveActions = [
  ["Edita registrazione", "w-[104px]", <g key="i"><path d="M0 13L1.500 9L10 .5L13 3L4.500 11.500Z" fill="#2f74c0" /><path d="M0 13L1.500 9L4.500 11.500Z" fill="#222" /></g>, false],
  ["Punch-in", "w-[67px]", <path key="i" d="M5 0H8V5L11.500 4L6.500 10L1.500 4L5 5ZM1 10.500H12V12.500H1Z" fill="#d2401c" />, false],
  ["Rimuovi registrazione", "w-[93px]", <g key="i"><circle cx="6.500" cy="6.500" r="6.300" fill="#cf4a36" /><path d="M3 5.300H10V7.700H3Z" fill="#fff" /></g>, true],
  ["Opzioni", "w-12", <path key="i" d="M2.500 1L5 3.500L4 5L1.500 4.500L.5 2Q0 6 3.500 7L10.500 13L13 11L6.500 4.500Q6.500 1 2.500 1Z" fill="#8a8a8a" />, true],
];

const columns = [
  ["Title", "w-[207px]"],
  ["Durata", "w-[104px]"],
  ["Nome file", "w-[311px]"],
  ["Dimensione", "w-[130px]"],
  ["Data creazione", "w-[104px]"],
  ["Creato da", "w-[174px]"],
  ["Ultima modifica", "w-[103px]"],
  ["Modificato da", ""],
];

const recordings = [["SIDIS 3.0", "00:00:29.048", "H:\\Users\\Downloads\\SIDIS 3.0.wav", "5004 KB", "26/11/2019 17:23:22", "", "26/11/2019 17:26:01", ""]];

function Archive() {
  const sections = ["Tutte", "Spot", "Voci", "Altro", "News"];
  const [section, setSection] = useState("Spot");
  return (
    <section className="shrink-0 flex flex-col text-[9px]">
      <div className="h-[22px] bg-[#ababab] border-b border-[#7c7c7c]">
        <h2 className="w-[128px] h-[21px] pl-[3px] leading-[20px] bg-[#ff2d12] border-t-2 border-[#1677c8] text-[#3f0d05] whitespace-nowrap [clip-path:polygon(0_0,107px_0,128px_100%,0_100%)]">
          ARCHIVIO REGISTRAZIONI
        </h2>
      </div>
      <div className="flex h-[138px]">
        <nav className="w-[122px] shrink-0 border-x border-b border-[#6d6d6d] bg-[#38383a]">
          <div className="flex flex-col h-[113px]">
            {sections.map((s) => (
              <button
                key={s}
                type="button"
                onClick={() => setSection(s)}
                className={clsx(
                  "flex-1 pt-px text-left border-b border-[#6d6d6d]",
                  s === "Tutte" ? "pl-3" : "pl-[9px]",
                  s === section ? "bg-[#dadada] text-[#2b2b2b]" : "bg-[#3e3e42] text-[#e6e6e6]"
                )}
              >
                {s}
              </button>
            ))}
          </div>
        </nav>
        <div className="flex-1 min-w-0 flex flex-col bg-[#222222]">
          <div className="h-[23px] shrink-0 bg-[#333335]">
            <div className="w-[727px] h-[22px] flex items-center pl-[14px] border-b border-[#bdbdbd] text-[7px] text-[#e8e8e8]">
              {archiveActions.map(([label, width, icon, menu]) => (
                <button key={label} type="button" className={clsx("flex items-center gap-[2px] whitespace-nowrap", width)}>
                  <svg viewBox="0 0 13 13" className="w-[13px] h-[13px] shrink-0" aria-hidden="true">{icon}</svg>
                  {label}
                  {menu && <svg viewBox="0 0 5 3" className="w-[5px] h-[3px] shrink-0 ml-[2px]"><path d="M0 0H5L2.500 3Z" fill="#0c0c0c" /></svg>}
                </button>
              ))}
            </div>
          </div>
          <table className="w-full table-fixed border-separate border-spacing-0 text-left">
            <thead>
              <tr className="h-4 bg-[#373737] text-[#b0b0b0] leading-[15px]">
                <th className="w-[10px] font-normal border-b border-[#6d6d6d] text-center">*</th>
                {columns.map(([c, w]) => (
                  <th key={c} className={clsx("font-normal pl-[2px] border-b border-b-[#6d6d6d] border-r border-r-[#2c2c2c] whitespace-nowrap", w)}>{c}</th>
                ))}
              </tr>
            </thead>
            <tbody>
              {recordings.map((r) => (
                <tr key={r[0]} className="h-[14px] leading-3 text-[#ececec]">
                  <td className="bg-[#333333]">
                    <svg viewBox="0 0 3 6" className="w-[3px] h-[6px] mx-auto"><path d="M0 0L3 3L0 6Z" fill="#f0f0f0" /></svg>
                  </td>
                  {r.map((v, i) => (
                    <td
                      key={columns[i][0]}
                      className={clsx("border-y border-[#d8d8d8] whitespace-nowrap", i === 0 ? "border-l pl-px" : "pl-[2px]", i === r.length - 1 && "border-r")}
                    >
                      {v}
                    </td>
                  ))}
                </tr>
              ))}
            </tbody>
          </table>
          <div className="mt-auto h-[15px] flex bg-[#2e2e2e] text-[#9c9c9c] leading-[14px]">
            <span className="w-[53px] pl-[5px] bg-[#393939]">Elementi: 1</span>
            <span className="w-[37px] bg-[#4d4d4d]" />
            <svg viewBox="0 0 3 6" className="w-[3px] h-[6px] ml-[6px] mt-1"><path d="M3 0L0 3L3 6Z" fill="#4a4a4a" /></svg>
          </div>
        </div>
      </div>
    </section>
  );
}

export default function App() {
  return (
    <div className="h-screen flex flex-col overflow-hidden bg-[#525252] font-['Roboto','Open_Sans',sans-serif] select-none">
      <Header />
      <Ribbon />
      <main className="flex flex-1 min-h-0 border-t-2 border-[#474747]">
        <ActiveWindows />
        <div className="relative flex-1 overflow-hidden bg-[#535353]">
          {windows.map((w) => (
            <AudioWindow key={w.id} {...w} />
          ))}
        </div>
      </main>
      <div className="h-1 shrink-0 bg-[#555555] flex justify-center">
        <span className="w-1 h-[3px] bg-[#909090]" />
      </div>
      <Archive />
      <footer className="h-4 shrink-0 flex items-center pt-px bg-linear-to-b from-[#5a5a5a] to-[#4c4c4c] text-[9px] text-[#e4e4e4]">
        <svg viewBox="0 0 12 12" className="w-3 h-3 mr-[2px] shrink-0" aria-hidden="true">
          <path d="M1 2Q4.500 -1 8 2V11Q4.500 13 1 11Z" fill="#e5ab52" />
          <path d="M6 5H12V12H6Z" fill="#e8edf2" stroke="#777" strokeWidth=".5" />
          <path d="M7.500 7H10.500M7.500 9H10.500" stroke="#556" strokeWidth=".8" />
        </svg>
        <span className="w-[214px]">XWORK2\SQLXDEVEL2014: xautoex</span>
        <span className="w-[65px] h-3 border-l border-[#464646]" />
        <span className="w-[65px] h-3 border-l border-[#464646]" />
        <span className="w-[65px] h-3 border-l border-[#464646]" />
      </footer>
    </div>
  );
}
